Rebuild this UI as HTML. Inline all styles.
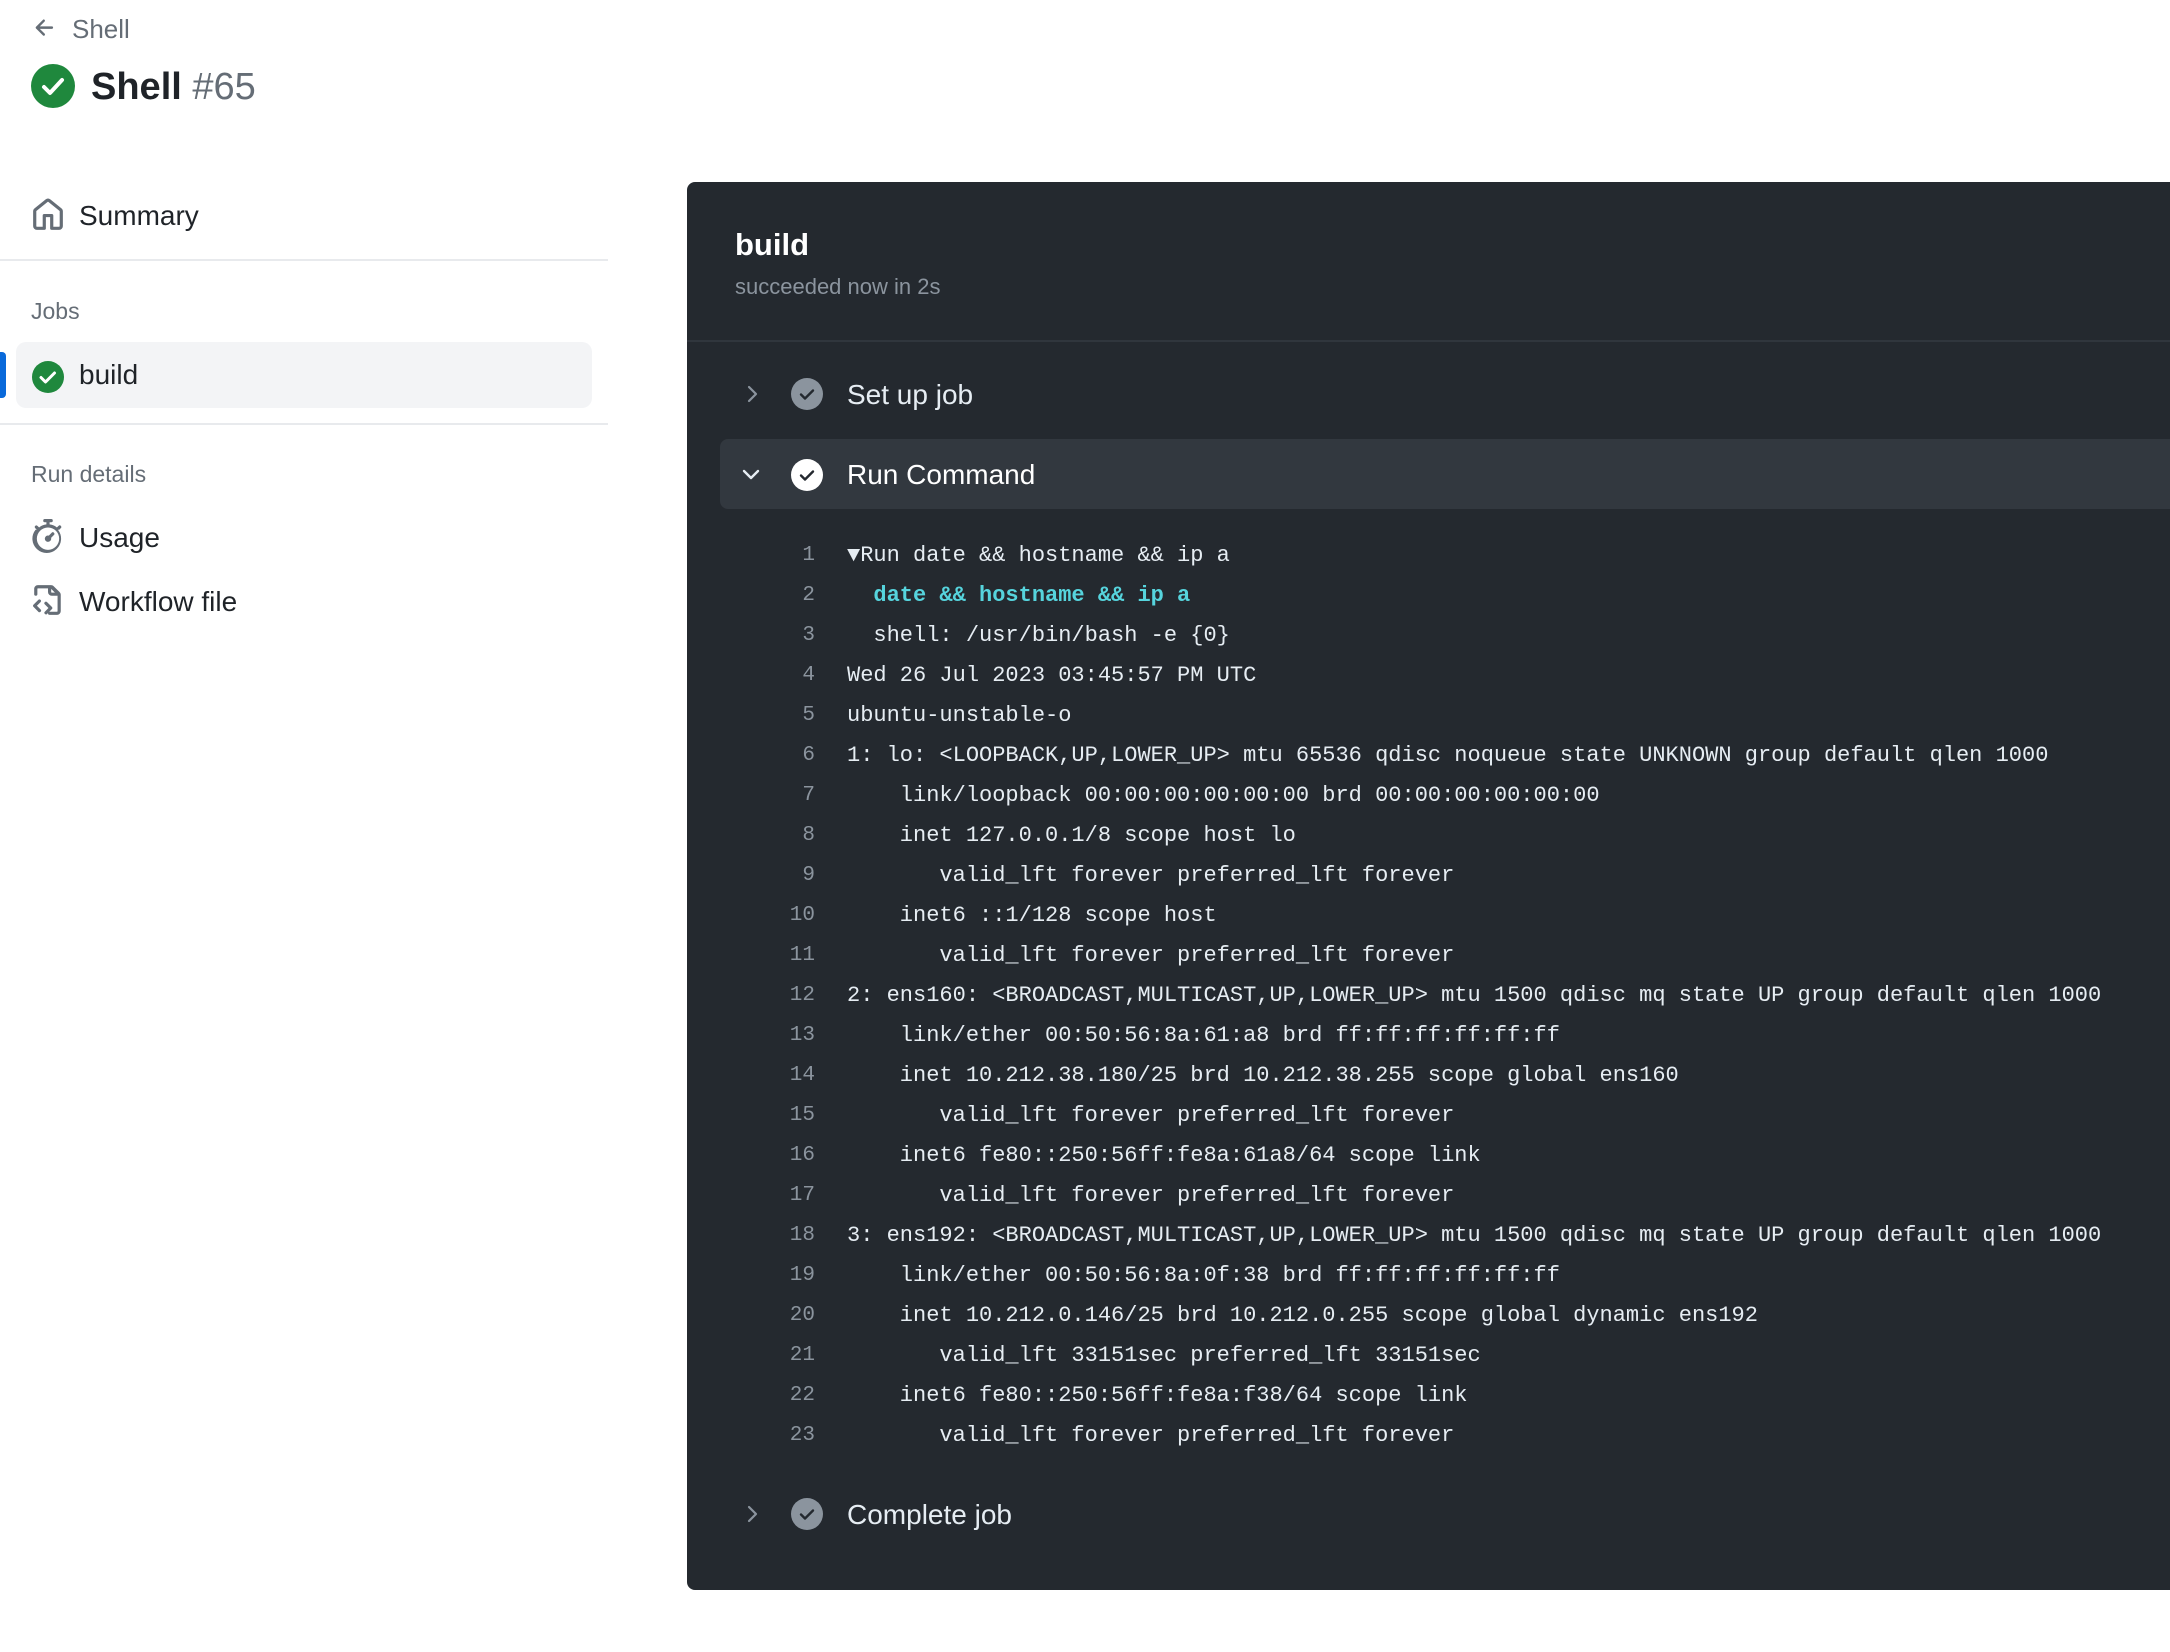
<!DOCTYPE html>
<html><head><meta charset="utf-8"><style>
*{margin:0;padding:0;box-sizing:border-box}
body{width:2170px;height:1652px;background:#fff;font-family:"Liberation Sans",sans-serif;position:relative;overflow:hidden;color:#1f2328}
.a{position:absolute;white-space:pre}
.side{font-size:28px;color:#1f2328}
.hdr{font-size:23px;color:#656d76}
.panel{position:absolute;left:687px;top:182px;width:1500px;height:1408px;background:#24292f;border-radius:8px 0 0 8px}
.log{font-family:"Liberation Mono",monospace;font-size:22px;color:#e6edf3}
.ln{position:absolute;width:60px;text-align:right;left:755px;color:#8b949e;font-family:"Liberation Mono",monospace;font-size:21px}
</style></head><body>
<svg class="a" style="left:32px;top:15px" width="26" height="26" viewBox="0 0 16 16"><path d="M7.78 12.53a.75.75 0 0 1-1.06 0L2.470 8.280a.75.75 0 0 1 0-1.06l4.25-4.25a.75.75 0 0 1 1.06 1.06L4.81 7h7.44a.75.75 0 0 1 0 1.5H4.81l2.97 2.97a.75.75 0 0 1 0 1.06Z" fill="#656d76"/></svg>
<div class="a" style="left:72px;top:14px;font-size:26px;color:#656d76">Shell</div>
<svg class="a" style="left:31px;top:64px" width="44" height="44" viewBox="0 0 44 44"><circle cx="22" cy="22" r="22" fill="#1f883d"/><path d="M13 23l6 6 12-13" stroke="#fff" stroke-width="4" fill="none" stroke-linecap="round" stroke-linejoin="round"/></svg>
<div class="a" style="left:91px;top:66px;font-size:38px;font-weight:bold;color:#1f2328">Shell <span style="font-weight:normal;color:#656d76">#65</span></div>

<svg class="a" style="left:31px;top:198px" width="34" height="34" viewBox="0 0 16 16"><path d="M6.906.664a1.749 1.749 0 0 1 2.187 0l5.25 4.2c.415.332.657.835.657 1.367v7.019A1.75 1.75 0 0 1 13.25 15h-3.5a.75.75 0 0 1-.75-.75V9H7v5.25a.75.75 0 0 1-.75.75h-3.5A1.75 1.75 0 0 1 1 13.250V6.23c0-.531.242-1.034.657-1.366l5.25-4.2Zm1.25 1.171a.25.25 0 0 0-.312 0l-5.25 4.2a.25.25 0 0 0-.094.196v7.019c0 .138.112.25.25.25H5.5V8.25a.75.75 0 0 1 .75-.75h3.5a.75.75 0 0 1 .75.75v5.25h2.75a.25.25 0 0 0 .25-.25V6.23a.25.25 0 0 0-.094-.195Z" fill="#656d76"/></svg>
<div class="a side" style="left:79px;top:200px">Summary</div>
<div class="a" style="left:0;top:259px;width:608px;height:2px;background:#e8eaed"></div>
<div class="a hdr" style="left:31px;top:298px">Jobs</div>
<div class="a" style="left:16px;top:342px;width:576px;height:66px;background:#f3f4f6;border-radius:10px"></div>
<div class="a" style="left:0;top:352px;width:6px;height:46px;background:#0969da;border-radius:0 4px 4px 0"></div>
<svg class="a" style="left:31px;top:360px" width="34" height="34" viewBox="0 0 34 34"><circle cx="17" cy="17" r="16" fill="#1f883d"/><path d="M10 17.5l4.5 4.5 9-9" stroke="#fff" stroke-width="3" fill="none" stroke-linecap="round" stroke-linejoin="round"/></svg>
<div class="a side" style="left:79px;top:359px">build</div>
<div class="a" style="left:0;top:423px;width:608px;height:2px;background:#e8eaed"></div>
<div class="a hdr" style="left:31px;top:461px">Run details</div>
<svg class="a" style="left:31px;top:519px" width="34" height="34" viewBox="0 0 16 16"><path d="M5.75.75A.75.75 0 0 1 6.5 0h3a.75.75 0 0 1 0 1.5h-.75v1l-.001.041a6.724 6.724 0 0 1 3.464 1.435l.007-.006.75-.75a.749.749 0 0 1 1.06 1.06l-.75.75-.6.007a6.75 6.75 0 1 1-10.548 0L2.72 5.03l-.75-.75a.751.751 0 0 1 1.06-1.060l.75.75.007.006A6.72 6.72 0 0 1 7.25 2.541V1.5H6.5a.75.75 0 0 1-.75-.75ZM8 14.5A5.25 5.25 0 1 0 8 4a5.25 5.25 0 0 0 0 10.5Zm.389-6.7 1.33-1.33a.75.75 0 1 1 1.061 1.06L9.45 8.861A1.503 1.503 0 0 1 8 10.75a1.499 1.499 0 1 1 .389-2.95Z" fill="#656d76"/></svg>
<div class="a side" style="left:79px;top:522px">Usage</div>
<svg class="a" style="left:31px;top:583px" width="34" height="34" viewBox="0 0 16 16"><path d="M1.5 13.25V2.75C1.5 1.784 2.284 1 3.25 1h6.19c.464 0 .909.184 1.237.513l2.81 2.81c.329.328.513.773.513 1.237v7.69A1.75 1.75 0 0 1 12.25 15h-3.5a.75.75 0 0 1 0-1.5h3.5a.25.25 0 0 0 .25-.25V6h-2.75A1.75 1.75 0 0 1 8 4.25V2.5H3.25a.25.25 0 0 0-.25.25v2.5a.75.75 0 0 1-1.5 0Zm8-10.5v1.5c0 .138.112.25.25.25h1.5Zm-5 6.25-1.72 1.72 1.72 1.72a.75.75 0 1 1-1.06 1.06l-2.25-2.25a.75.75 0 0 1 0-1.06l2.25-2.25A.75.75 0 0 1 4.5 9Zm2 0a.75.75 0 0 1 1.06 0l2.25 2.25a.75.75 0 0 1 0 1.06l-2.25 2.25A.75.75 0 0 1 6.5 13.5l1.72-1.72L6.5 10.06a.75.75 0 0 1 0-1.06Z" fill="#656d76"/></svg>
<div class="a side" style="left:79px;top:586px">Workflow file</div>

<div class="panel"></div>
<div class="a" style="left:735px;top:227px;font-size:31px;font-weight:bold;color:#fff">build</div>
<div class="a" style="left:735px;top:274px;font-size:22px;color:#8b949e">succeeded now in 2s</div>
<div class="a" style="left:687px;top:340px;width:1483px;height:2px;background:#30363d"></div>

<svg class="a" style="left:742px;top:382px" width="22" height="24" viewBox="0 0 22 24"><path d="M7 5l7 7-7 7" stroke="#8b949e" stroke-width="2.2" fill="none" stroke-linecap="round" stroke-linejoin="round"/></svg>
<svg class="a" style="left:790px;top:377px" width="34" height="34" viewBox="0 0 34 34"><circle cx="17" cy="17" r="16" fill="#8b949e"/><path d="M11 17.5l4 4 8-8" stroke="#24292f" stroke-width="2.4" fill="none" stroke-linecap="round" stroke-linejoin="round"/></svg>
<div class="a" style="left:847px;top:379px;font-size:28px;color:#e6edf3">Set up job</div>

<div class="a" style="left:720px;top:439px;width:1460px;height:70px;background:#32383f;border-radius:8px"></div>
<svg class="a" style="left:739px;top:464px" width="24" height="22" viewBox="0 0 24 22"><path d="M5 7l7 7 7-7" stroke="#e6edf3" stroke-width="2.4" fill="none" stroke-linecap="round" stroke-linejoin="round"/></svg>
<svg class="a" style="left:790px;top:458px" width="34" height="34" viewBox="0 0 34 34"><circle cx="17" cy="17" r="16" fill="#fff"/><path d="M11 17.5l4 4 8-8" stroke="#24292f" stroke-width="2.4" fill="none" stroke-linecap="round" stroke-linejoin="round"/></svg>
<div class="a" style="left:847px;top:459px;font-size:28px;color:#fff">Run Command</div>

<div class="ln" style="top:544px">1</div><div class="a log" style="left:847px;top:543px">▼Run date &amp;&amp; hostname &amp;&amp; ip a</div>
<div class="ln" style="top:584px">2</div><div class="a log" style="left:847px;top:583px;color:#56d4dd;font-weight:bold">  date &amp;&amp; hostname &amp;&amp; ip a</div>
<div class="ln" style="top:624px">3</div><div class="a log" style="left:847px;top:623px">  shell: /usr/bin/bash -e {0}</div>
<div class="ln" style="top:664px">4</div><div class="a log" style="left:847px;top:663px">Wed 26 Jul 2023 03:45:57 PM UTC</div>
<div class="ln" style="top:704px">5</div><div class="a log" style="left:847px;top:703px">ubuntu-unstable-o</div>
<div class="ln" style="top:744px">6</div><div class="a log" style="left:847px;top:743px">1: lo: &lt;LOOPBACK,UP,LOWER_UP&gt; mtu 65536 qdisc noqueue state UNKNOWN group default qlen 1000</div>
<div class="ln" style="top:784px">7</div><div class="a log" style="left:847px;top:783px">    link/loopback 00:00:00:00:00:00 brd 00:00:00:00:00:00</div>
<div class="ln" style="top:824px">8</div><div class="a log" style="left:847px;top:823px">    inet 127.0.0.1/8 scope host lo</div>
<div class="ln" style="top:864px">9</div><div class="a log" style="left:847px;top:863px">       valid_lft forever preferred_lft forever</div>
<div class="ln" style="top:904px">10</div><div class="a log" style="left:847px;top:903px">    inet6 ::1/128 scope host</div>
<div class="ln" style="top:944px">11</div><div class="a log" style="left:847px;top:943px">       valid_lft forever preferred_lft forever</div>
<div class="ln" style="top:984px">12</div><div class="a log" style="left:847px;top:983px">2: ens160: &lt;BROADCAST,MULTICAST,UP,LOWER_UP&gt; mtu 1500 qdisc mq state UP group default qlen 1000</div>
<div class="ln" style="top:1024px">13</div><div class="a log" style="left:847px;top:1023px">    link/ether 00:50:56:8a:61:a8 brd ff:ff:ff:ff:ff:ff</div>
<div class="ln" style="top:1064px">14</div><div class="a log" style="left:847px;top:1063px">    inet 10.212.38.180/25 brd 10.212.38.255 scope global ens160</div>
<div class="ln" style="top:1104px">15</div><div class="a log" style="left:847px;top:1103px">       valid_lft forever preferred_lft forever</div>
<div class="ln" style="top:1144px">16</div><div class="a log" style="left:847px;top:1143px">    inet6 fe80::250:56ff:fe8a:61a8/64 scope link</div>
<div class="ln" style="top:1184px">17</div><div class="a log" style="left:847px;top:1183px">       valid_lft forever preferred_lft forever</div>
<div class="ln" style="top:1224px">18</div><div class="a log" style="left:847px;top:1223px">3: ens192: &lt;BROADCAST,MULTICAST,UP,LOWER_UP&gt; mtu 1500 qdisc mq state UP group default qlen 1000</div>
<div class="ln" style="top:1264px">19</div><div class="a log" style="left:847px;top:1263px">    link/ether 00:50:56:8a:0f:38 brd ff:ff:ff:ff:ff:ff</div>
<div class="ln" style="top:1304px">20</div><div class="a log" style="left:847px;top:1303px">    inet 10.212.0.146/25 brd 10.212.0.255 scope global dynamic ens192</div>
<div class="ln" style="top:1344px">21</div><div class="a log" style="left:847px;top:1343px">       valid_lft 33151sec preferred_lft 33151sec</div>
<div class="ln" style="top:1384px">22</div><div class="a log" style="left:847px;top:1383px">    inet6 fe80::250:56ff:fe8a:f38/64 scope link</div>
<div class="ln" style="top:1424px">23</div><div class="a log" style="left:847px;top:1423px">       valid_lft forever preferred_lft forever</div>

<svg class="a" style="left:742px;top:1502px" width="22" height="24" viewBox="0 0 22 24"><path d="M7 5l7 7-7 7" stroke="#8b949e" stroke-width="2.2" fill="none" stroke-linecap="round" stroke-linejoin="round"/></svg>
<svg class="a" style="left:790px;top:1497px" width="34" height="34" viewBox="0 0 34 34"><circle cx="17" cy="17" r="16" fill="#8b949e"/><path d="M11 17.5l4 4 8-8" stroke="#24292f" stroke-width="2.4" fill="none" stroke-linecap="round" stroke-linejoin="round"/></svg>
<div class="a" style="left:847px;top:1499px;font-size:28px;color:#e6edf3">Complete job</div>
</body></html>
